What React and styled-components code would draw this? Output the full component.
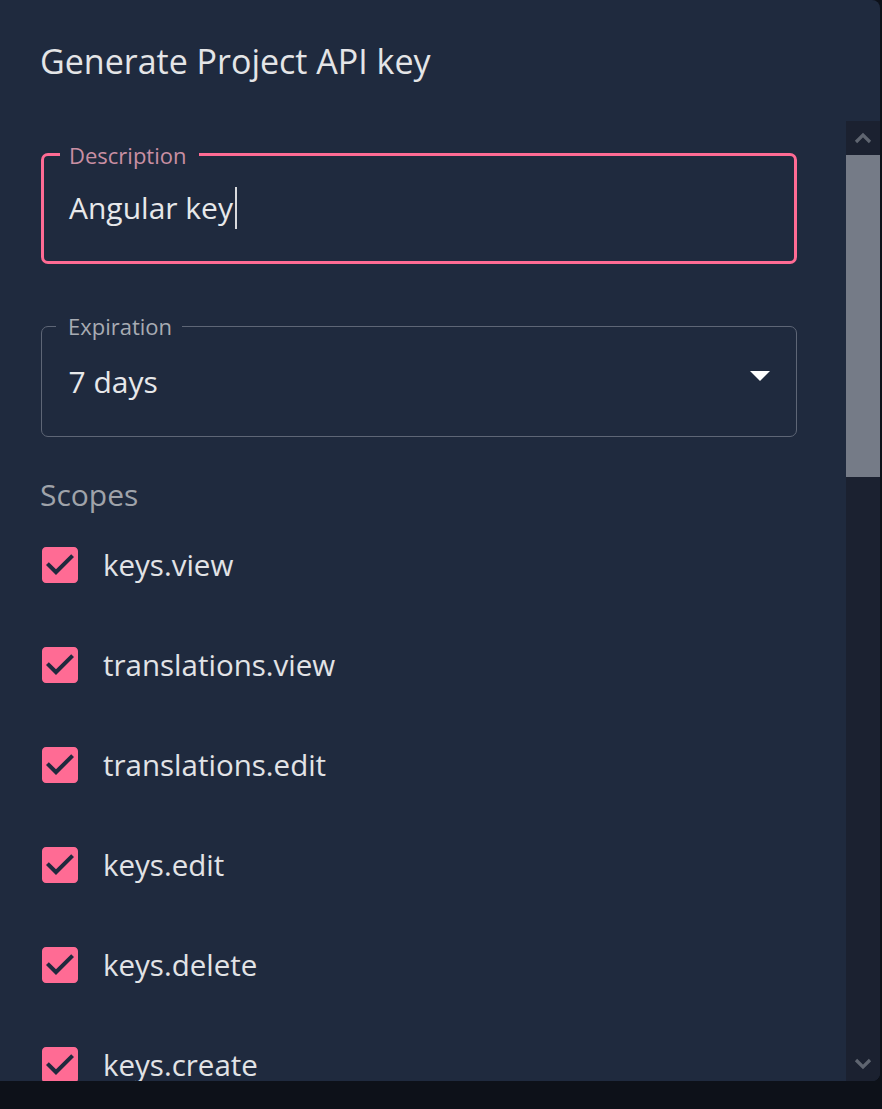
import React from 'react'
import styled, { createGlobalStyle } from 'styled-components'

const GlobalStyle = createGlobalStyle`
  html, body {
    margin: 0;
    padding: 0;
    background: #0d1119;
  }
  body {
    font-family: "Open Sans", "Noto Sans", sans-serif;
  }
`

const Page = styled.div`
  width: 882px;
  height: 1109px;
  background: #0d1119;
  overflow: hidden;
`

const Panel = styled.div`
  width: 880px;
  height: 1081px;
  background: #1f2a3e;
  border-radius: 0 8px 8px 0;
  overflow: hidden;
  display: flex;
  flex-direction: column;
`

const Title = styled.h2`
  margin: 0;
  height: 121px;
  flex-shrink: 0;
  box-sizing: border-box;
  padding: 0 40px;
  display: flex;
  align-items: center;
  font-weight: 400;
  font-size: 34px;
  color: #e4e5e7;
`

const Body = styled.div`
  flex: 1;
  display: flex;
  min-height: 0;
`

const Content = styled.div`
  flex: 1;
  overflow: hidden;
  padding: 32px 49px 0 41px;
  display: flex;
  flex-direction: column;
`

const Field = styled.div`
  position: relative;
  height: 111px;
  box-sizing: border-box;
  border-radius: 7px;
  border: ${({focused}) => focused ? '3px solid #ff6b94' : '1.5px solid #5e6676'};
  margin-top: ${({mt}) => mt || 0}px;
  display: flex;
  align-items: center;
  padding: 0 ${({focused}) => focused ? 25 : 26.5}px;
  flex-shrink: 0;
`

const Legend = styled.span`
  position: absolute;
  top: -15px;
  left: ${({focused}) => focused ? 16 : 14}px;
  padding: ${({focused}) => focused ? '0 13px 0 9px' : '0 10px 0 12px'};
  background: #1f2a3e;
  font-size: 22px;
  line-height: 28px;
  color: ${({focused}) => focused ? '#c98fa3' : '#a8acb3'};
`

const Value = styled.span`
  font-size: 30px;
  color: #e7e8ea;
  line-height: 42px;
  display: flex;
  align-items: center;
  margin-top: ${({focused}) => focused ? -2 : 0}px;
`

const Caret = styled.span`
  display: inline-block;
  width: 1.5px;
  height: 42px;
  background: #d8d9dc;
  margin-left: 2px;
`

const Arrow = styled.svg`
  position: absolute;
  right: 12px;
  top: 24px;
  width: 48px;
  height: 48px;
  fill: #ffffff;
`

const ScopesTitle = styled.div`
  margin-top: 38px;
  font-size: 30px;
  line-height: 40px;
  color: #9fa3aa;
  margin-left: -1px;
`

const ScopeRow = styled.label`
  height: 100px;
  flex-shrink: 0;
  display: flex;
  align-items: center;
  gap: 19px;
  margin-left: -5px;
`

const CheckIcon = styled.svg`
  width: 48px;
  height: 48px;
  fill: #ff6b94;
  flex-shrink: 0;
`

const ScopeName = styled.span`
  font-size: 29.5px;
  color: #e2e3e6;
  margin-top: -1px;
`

const Scrollbar = styled.div`
  width: 34px;
  flex-shrink: 0;
  background: #1b2130;
  display: flex;
  flex-direction: column;
`

const ScrollButton = styled.div`
  height: 34px;
  display: flex;
  align-items: center;
  justify-content: center;
  flex-shrink: 0;
`

const Thumb = styled.div`
  height: 322px;
  background: #757b87;
  flex-shrink: 0;
`

const Track = styled.div`
  flex: 1;
`

const scopes = ['keys.view', 'translations.view', 'translations.edit', 'keys.edit', 'keys.delete', 'keys.create']

const Chevron = ({up}) => (
  <svg width="18" height="12" viewBox="0 0 18 12">
    <path d={up ? 'M2 10 L9 3 L16 10' : 'M2 2 L9 9 L16 2'} fill="none" stroke="#5f6570" strokeWidth="3.2" />
  </svg>
)

const App = () => {
  return (
    <Page>
      <GlobalStyle />
      <Panel>
        <Title>Generate Project API key</Title>
        <Body>
          <Content>
            <Field focused>
              <Legend focused>Description</Legend>
              <Value focused>Angular key<Caret /></Value>
            </Field>
            <Field mt={62}>
              <Legend>Expiration</Legend>
              <Value>7 days</Value>
              <Arrow viewBox="0 0 24 24"><path d="M7 10l5 5 5-5z" /></Arrow>
            </Field>
            <ScopesTitle>Scopes</ScopesTitle>
            {scopes.map((item, index) => (
              <ScopeRow key={index}>
                <CheckIcon viewBox="0 0 24 24">
                  <path d="M19 3H5c-1.11 0-2 .9-2 2v14c0 1.1.89 2 2 2h14c1.11 0 2-.9 2-2V5c0-1.1-.89-2-2-2zm-9 14l-5-5 1.41-1.41L10 14.17l7.59-7.59L19 8l-9 9z" />
                </CheckIcon>
                <ScopeName>{item}</ScopeName>
              </ScopeRow>
            ))}
          </Content>
          <Scrollbar>
            <ScrollButton><Chevron up /></ScrollButton>
            <Thumb />
            <Track />
            <ScrollButton><Chevron /></ScrollButton>
          </Scrollbar>
        </Body>
      </Panel>
    </Page>
  )
}

export default App
